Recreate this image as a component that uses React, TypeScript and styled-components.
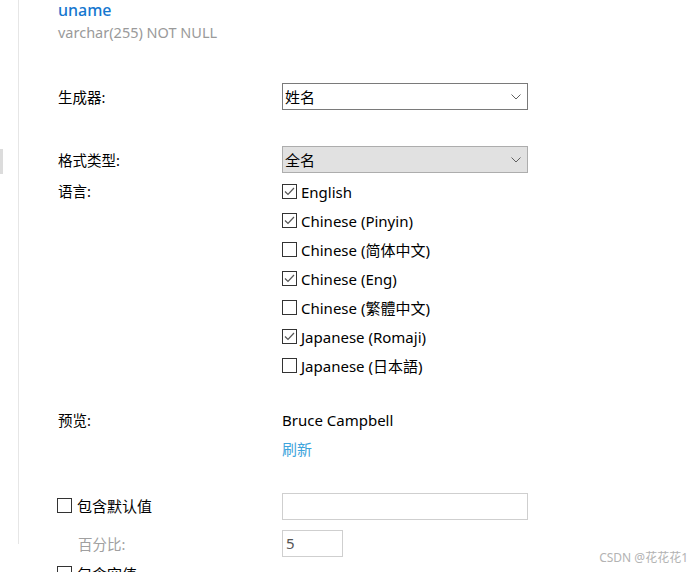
import React from 'react';
import styled, { createGlobalStyle } from 'styled-components';

const GlobalStyle = createGlobalStyle`
  html, body {
    margin: 0;
    padding: 0;
    background: #ffffff;
  }
  body {
    font-family: "Noto Sans", "Noto Sans CJK SC", sans-serif;
    font-size: 15px;
    color: #000;
  }
`;

const Page = styled.div`
  position: relative;
  display: flex;
  align-items: flex-start;
  width: 698px;
  height: 572px;
  overflow: hidden;
`;

const Sidebar = styled.aside`
  flex: 0 0 18px;
  height: 544px;
  border-right: 1px solid #e6e6e6;
`;

const SideTab = styled.div`
  margin-top: 149px;
  width: 3px;
  height: 25px;
  background: #dcdcdc;
`;

const Content = styled.main`
  flex: 1;
  display: flex;
  flex-direction: column;
  padding-left: 39px;

  & > * {
    flex-shrink: 0;
  }
`;

const FieldName = styled.div`
  height: 20px;
  line-height: 20px;
  font-size: 16px;
  font-weight: 500;
  color: #1577cf;
`;

const FieldType = styled.div`
  height: 25px;
  line-height: 25px;
  font-size: 14.5px;
  color: #9a9a9a;
`;

const Row = styled.div<{ $top: number; $height: number }>`
  display: grid;
  grid-template-columns: 224px 246px;
  align-items: center;
  margin-top: ${(p) => p.$top}px;
  min-height: ${(p) => p.$height}px;
`;

const Label = styled.div<{ $muted?: boolean; $indent?: number }>`
  font-size: 14.5px;
  color: ${(p) => (p.$muted ? '#a0a0a0' : '#000')};
  padding-left: ${(p) => p.$indent ?? 0}px;
  align-self: center;
`;

const TopLabel = styled(Label)`
  align-self: start;
  line-height: 29px;
`;

const Select = styled.div<{ $filled?: boolean }>`
  box-sizing: border-box;
  display: flex;
  align-items: center;
  justify-content: space-between;
  height: 27px;
  padding: 0 6px 0 2px;
  border: 1px solid ${(p) => (p.$filled ? '#adadad' : '#7a7a7a')};
  background: ${(p) => (p.$filled ? '#e1e1e1' : '#fff')};
`;

const Input = styled.div<{ $width: number }>`
  box-sizing: border-box;
  width: ${(p) => p.$width}px;
  height: 27px;
  line-height: 25px;
  padding: 0 3px;
  border: 1px solid #cfcfcf;
  color: #555;
`;

const CheckList = styled.div`
  display: flex;
  flex-direction: column;
`;

const CheckRow = styled.label`
  display: flex;
  align-items: center;
  gap: 4px;
  height: 29px;
`;

const Box = styled.span`
  box-sizing: border-box;
  display: inline-flex;
  align-items: center;
  justify-content: center;
  width: 15px;
  height: 15px;
  border: 1px solid #333;
  background: #fff;
  flex: 0 0 auto;
`;

const Stack = styled.div`
  display: flex;
  flex-direction: column;
`;

const Line = styled.div`
  height: 29px;
  line-height: 29px;
`;

const LinkText = styled(Line)`
  color: #3ea4dc;
`;

const CheckLabel = styled.div`
  display: flex;
  align-items: center;
  gap: 5px;
  margin-left: -1px;
  margin-top: -3px;
`;

const Watermark = styled.div`
  position: absolute;
  right: 10px;
  bottom: 6px;
  font-size: 12px;
  color: #b3b3b3;
`;

const Chevron = () => (
  <svg width="10" height="6" viewBox="0 0 10 6">
    <path d="M0.5 0.5 L5 5 L9.5 0.5" fill="none" stroke="#606060" strokeWidth="1" />
  </svg>
);

const Check = ({ on }: { on: boolean }) => (
  <Box>
    {on && (
      <svg width="11" height="9" viewBox="0 0 11 9">
        <path d="M1 4.5 L4 7.5 L10 1" fill="none" stroke="#555" strokeWidth="1.2" />
      </svg>
    )}
  </Box>
);

const languages: [string, boolean][] = [
  ['English', true],
  ['Chinese (Pinyin)', true],
  ['Chinese (简体中文)', false],
  ['Chinese (Eng)', true],
  ['Chinese (繁體中文)', false],
  ['Japanese (Romaji)', true],
  ['Japanese (日本語)', false],
];

function App() {
  return (
    <>
      <GlobalStyle />
      <Page>
        <Sidebar>
          <SideTab />
        </Sidebar>
        <Content>
          <FieldName>uname</FieldName>
          <FieldType>varchar(255) NOT NULL</FieldType>

          <Row $top={38} $height={27}>
            <Label>生成器:</Label>
            <Select>
              <span>姓名</span>
              <Chevron />
            </Select>
          </Row>

          <Row $top={36} $height={26}>
            <Label>格式类型:</Label>
            <Select $filled>
              <span>全名</span>
              <Chevron />
            </Select>
          </Row>

          <Row $top={4} $height={29}>
            <TopLabel>语言:</TopLabel>
            <CheckList>
              {languages.map(([name, on]) => (
                <CheckRow key={name}>
                  <Check on={on} />
                  <span>{name}</span>
                </CheckRow>
              ))}
            </CheckList>
          </Row>

          <Row $top={26} $height={58}>
            <TopLabel>预览:</TopLabel>
            <Stack>
              <Line>Bruce Campbell</Line>
              <LinkText>刷新</LinkText>
            </Stack>
          </Row>

          <Row $top={29} $height={27}>
            <CheckLabel>
              <Check on={false} />
              <span>包含默认值</span>
            </CheckLabel>
            <Input $width={246} />
          </Row>

          <Row $top={10} $height={27}>
            <Label $muted $indent={20}>百分比:</Label>
            <Input $width={61}>5</Input>
          </Row>

          <Row $top={4} $height={27}>
            <CheckLabel>
              <Check on={false} />
              <span>包含空值</span>
            </CheckLabel>
          </Row>
        </Content>
        <Watermark>CSDN @花花花1</Watermark>
      </Page>
    </>
  );
}

export default App;
